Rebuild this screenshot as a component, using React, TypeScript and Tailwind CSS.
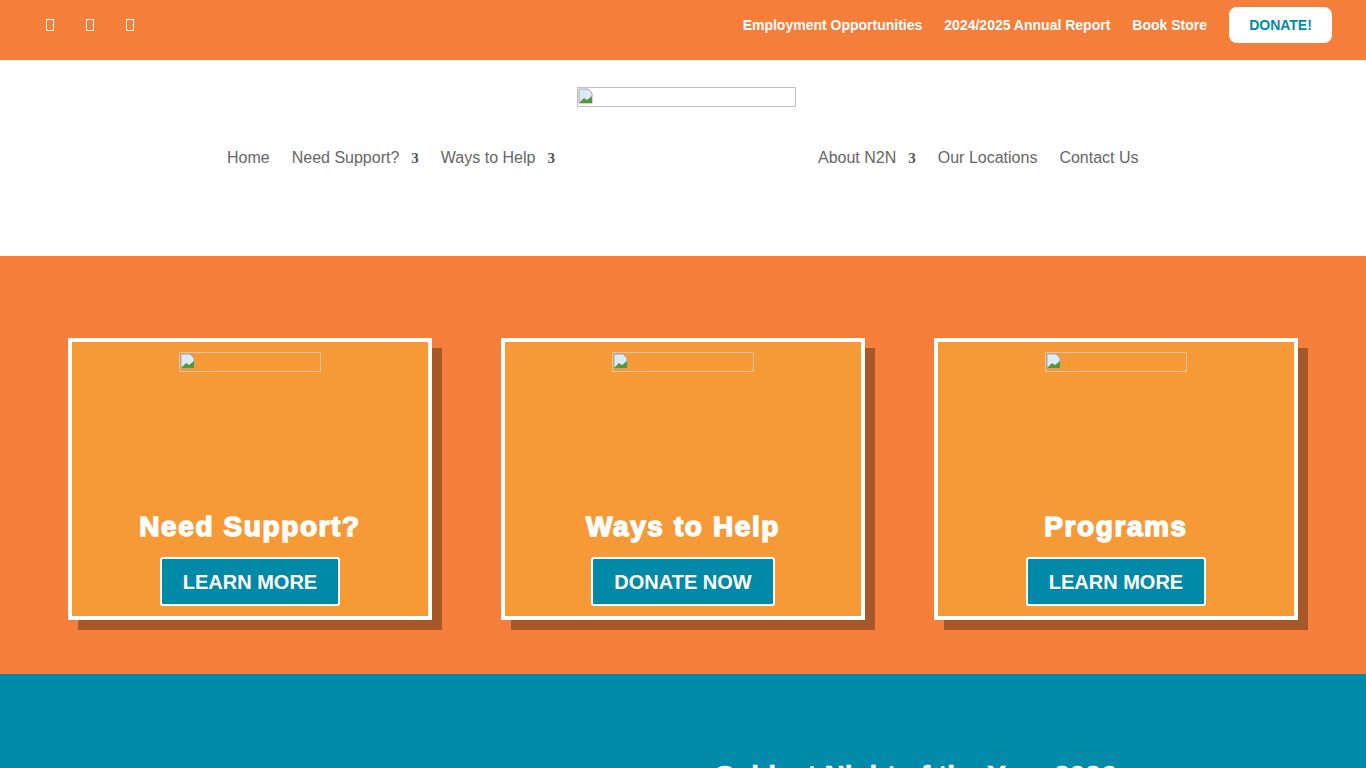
import React from "react";

const topLinks = ["Employment Opportunities", "2024/2025 Annual Report", "Book Store"];

const leftNav = [
  { label: "Home", sub: false },
  { label: "Need Support?", sub: true },
  { label: "Ways to Help", sub: true },
];

const rightNav = [
  { label: "About N2N", sub: true },
  { label: "Our Locations", sub: false },
  { label: "Contact Us", sub: false },
];

const cards = [
  { title: "Need Support?", cta: "LEARN MORE" },
  { title: "Ways to Help", cta: "DONATE NOW" },
  { title: "Programs", cta: "LEARN MORE" },
];

function BrokenImage({ className }: { className: string }) {
  return (
    <div className={`flex items-start border border-[#c0c0c0] ${className}`}>
      <svg width="16" height="16" viewBox="0 0 16 16" className="shrink-0">
        <path d="M1 1h9l4 4v10H1z" fill="#dfe9f5" stroke="#9aa8b8" strokeWidth="1" />
        <path d="M1 15l5-5 3 2 5-4v7z" fill="#4f9b3a" />
      </svg>
    </div>
  );
}

function NavItem({ label, sub }: { label: string; sub: boolean }) {
  return (
    <div className="flex items-center">
      <span>{label}</span>
      {sub && (
        <span className="ml-3 font-['Liberation_Serif',serif] text-[15px] font-bold text-[#555]">3</span>
      )}
    </div>
  );
}

export default function App() {
  return (
    <div className="min-h-screen bg-[#018ba9] font-['Liberation_Sans',Arial,sans-serif]">
      {/* TOP BAR */}
      <div className="h-[60px] bg-[#f47e3a]">
        <div className="flex h-[50px] items-center justify-between pl-[46px] pr-[34px]">
          <div className="flex gap-8">
            {[0, 1, 2].map((i) => (
              <span key={i} className="h-[12px] w-[8px] border border-white" />
            ))}
          </div>
          <div className="flex items-center">
            {topLinks.map((l) => (
              <a key={l} className="mr-[22px] text-[14px] font-bold text-white">
                {l}
              </a>
            ))}
            <a className="flex h-[36px] w-[103px] items-center justify-center rounded-[8px] bg-white text-[14px] font-bold text-[#0189a8]">
              DONATE!
            </a>
          </div>
        </div>
      </div>

      {/* HEADER */}
      <div className="flex h-[196px] flex-col items-center bg-white pt-[27px]">
        <BrokenImage className="ml-[7px] h-[20px] w-[219px]" />
        <nav className="mt-[39px] flex items-center text-[16px] text-[#666]">
          <div className="flex w-[329px] items-center gap-[22px]">
            {leftNav.map((n) => (
              <NavItem key={n.label} {...n} />
            ))}
          </div>
          <div className="w-[262px]" />
          <div className="flex w-[321px] items-center gap-[22px]">
            {rightNav.map((n) => (
              <NavItem key={n.label} {...n} />
            ))}
          </div>
        </nav>
      </div>

      {/* CARDS */}
      <div className="h-[418px] bg-[#f47e3a] pt-[82px]">
        <div className="ml-[68px] grid w-[1230px] grid-cols-3 gap-[69px]">
          {cards.map((c) => (
            <div
              key={c.title}
              className="flex h-[282px] flex-col items-center border-4 border-white bg-[#f59a36] pt-[10px] pb-[10px] shadow-[10px_10px_0_0_#a85828]"
            >
              <BrokenImage className="h-[20px] w-[142px] border-[#e6c49a]" />
              <div className="flex-1" />
              <h2 className="text-[28px] font-bold leading-none tracking-[1.6px] text-white [-webkit-text-stroke:1.5px_white]">
                {c.title}
              </h2>
              <button className="mt-[16px] h-[49px] rounded-[3px] border-2 border-white bg-[#0189a8] px-[21px] text-[20px] font-bold text-white">
                {c.cta}
              </button>
            </div>
          ))}
        </div>
      </div>

      {/* TEAL SECTION */}
      <div className="h-[94px] overflow-hidden bg-[#018ba9] pl-[714px] pt-[84px]">
        <h2 className="text-[28px] font-bold leading-tight text-white [-webkit-text-stroke:0.5px_white]">
          Coldest Night of the Year 2026
        </h2>
      </div>
    </div>
  );
}
